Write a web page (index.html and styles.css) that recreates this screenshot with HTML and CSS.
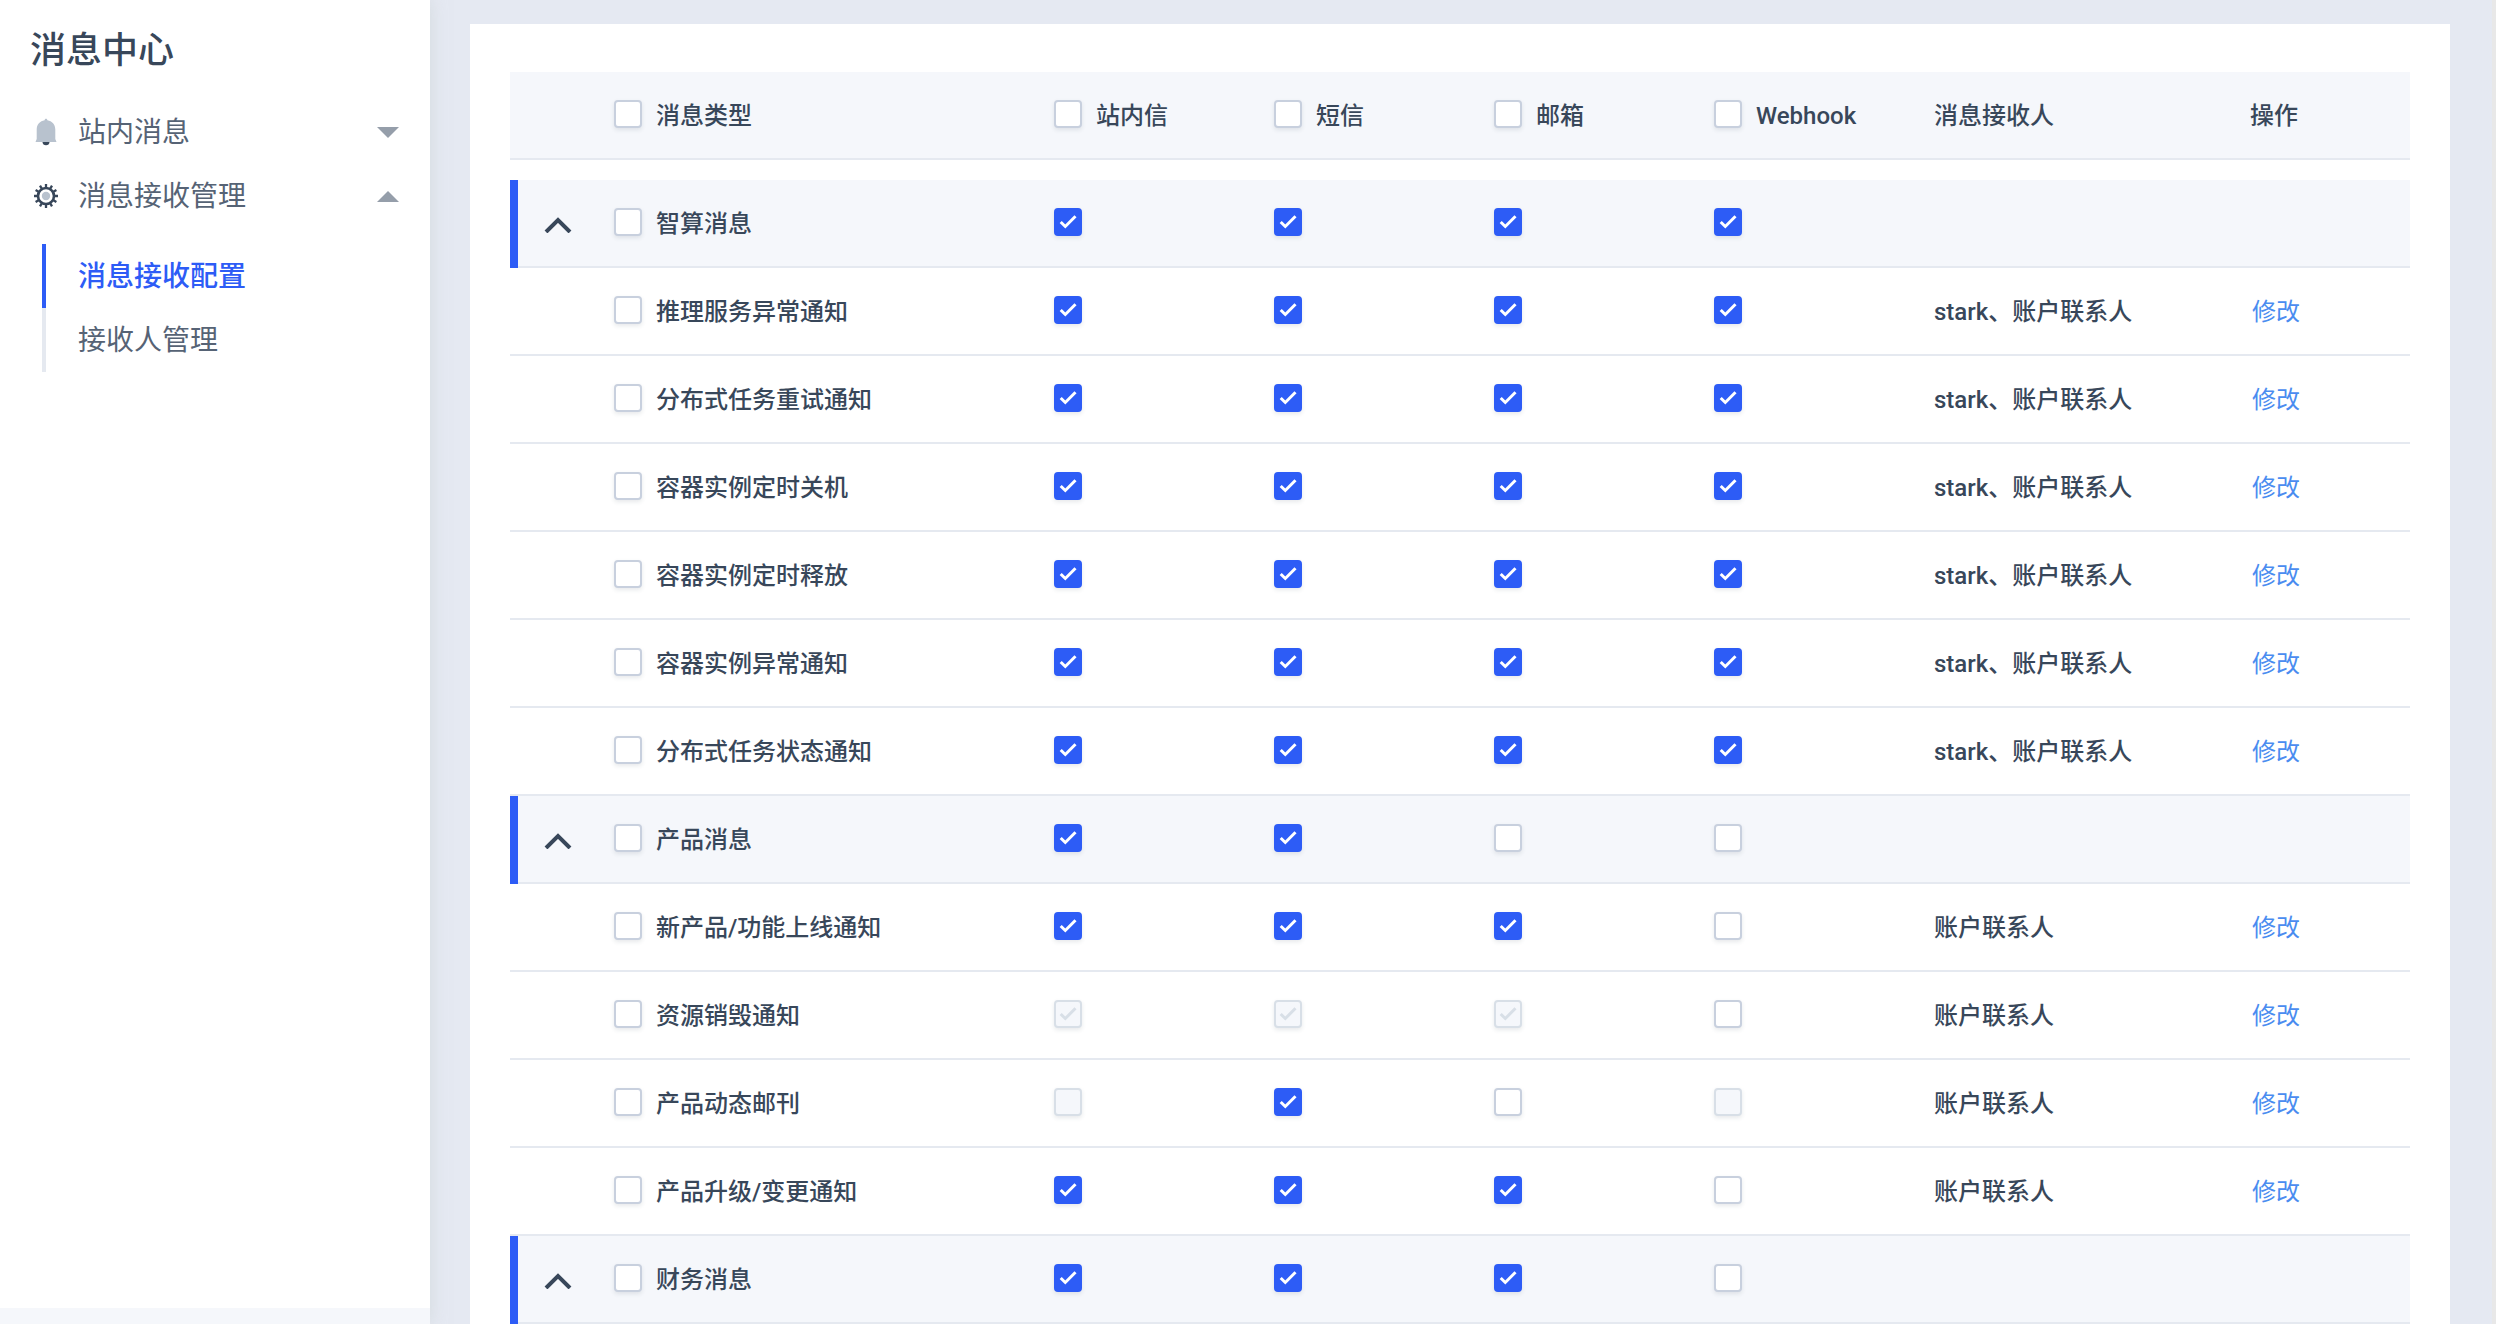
FILE: index.html
```html
<!DOCTYPE html>
<html lang="zh-CN">
<head>
<meta charset="utf-8">
<meta name="viewport" content="width=device-width, initial-scale=1">
<title>消息中心</title>
<link rel="stylesheet" href="styles.css">
</head>
<body>
<div class="app">
  <aside class="sidebar">
    <h1 class="sidebar-title">消息中心</h1>
    <nav class="menu">
      <button class="menu-item" type="button" aria-expanded="false">
        <svg class="menu-icon" viewBox="0 0 26 28" aria-hidden="true">
          <path d="M9.500 24h7c0 2-1.500 3.300-3.500 3.300S9.500 26 9.500 24z" fill="#38475a"/>
          <path d="M13 0.800c0.900 0 1.300 0.600 1.400 1.500C19 3 22.300 6.500 22.300 11.500V21l1.200 3H2.500l1.200-3v-9.500C3.700 6.500 7 3 11.600 2.300c0.100-0.900 0.500-1.500 1.400-1.500z" fill="#b8c2ce"/>
        </svg>
        <span class="menu-label">站内消息</span>
        <svg class="arrow" viewBox="0 0 22 11" aria-hidden="true"><path d="M0 0h22L11 11z"/></svg>
      </button>
      <button class="menu-item" type="button" aria-expanded="true">
        <svg class="menu-icon" viewBox="0 0 26 28" aria-hidden="true">
          <circle cx="13" cy="14" r="8" fill="none" stroke="#38475a" stroke-width="2.600"/>
          <path d="M13 2v4M13 22v4M1 14h4M21 14h4M7 3.600l2 3.460M17 20.940l2 3.460M2.600 8l3.460 2M19.940 18l3.460 2M2.600 20l3.460-2M19.940 10l3.460-2M7 24.400l2-3.460M17 7.060l2-3.460" stroke="#38475a" stroke-width="2.300"/>
          <circle cx="13" cy="14" r="4.200" fill="#b8c2ce"/>
        </svg>
        <span class="menu-label">消息接收管理</span>
        <svg class="arrow" viewBox="0 0 22 11" aria-hidden="true"><path d="M0 11h22L11 0z"/></svg>
      </button>
      <div class="submenu">
        <a class="submenu-item active" href="#config" aria-current="page">消息接收配置</a>
        <a class="submenu-item" href="#receivers">接收人管理</a>
      </div>
    </nav>
    <div class="sidebar-footer"></div>
  </aside>
  <main class="content">
    <section class="card">
      <table class="table">
        <colgroup>
          <col class="col-toggle"><col><col class="col-channel"><col class="col-channel"><col class="col-channel"><col class="col-channel"><col class="col-receiver"><col class="col-action">
        </colgroup>
        <thead>
          <tr class="shaded">
            <td></td>
            <th scope="col"><label class="field"><input class="check" type="checkbox"><span>消息类型</span></label></th>
            <th scope="col"><label class="field"><input class="check" type="checkbox"><span>站内信</span></label></th>
            <th scope="col"><label class="field"><input class="check" type="checkbox"><span>短信</span></label></th>
            <th scope="col"><label class="field"><input class="check" type="checkbox"><span>邮箱</span></label></th>
            <th scope="col"><label class="field"><input class="check" type="checkbox"><span>Webhook</span></label></th>
            <th scope="col">消息接收人</th>
            <th scope="col">操作</th>
          </tr>
        </thead>
        <tbody id="rows">
          <tr class="spacer"><td colspan="8"></td></tr>
        </tbody>
      </table>
    </section>
  </main>
</div>
<script src="app.js"></script>
</body>
</html>
```
FILE: styles.css
```css
* { box-sizing: border-box; }

body {
  margin: 0;
  background: #e5e9f2;
  color: #38475a;
  font: 500 24px/32px Roboto, "Noto Sans CJK SC", sans-serif;
}

button {
  border: 0;
  padding: 0;
  background: none;
  color: inherit;
  font: inherit;
  text-align: left;
  cursor: pointer;
}

a { text-decoration: none; }

.app {
  display: flex;
  height: 100vh;
  overflow: hidden;
  border-right: 4px solid #e8e8e8;
}

.sidebar {
  display: flex;
  flex: 0 0 430px;
  flex-direction: column;
  background: #fff;
  box-shadow: 0 0 16px rgba(200, 208, 208, 0.6);
}

.sidebar-title {
  margin: 0;
  padding: 27px 30px 25px;
  font-size: 36px;
  line-height: 48px;
  font-weight: 500;
}

.menu {
  flex: 1;
  color: #566375;
  font-size: 28px;
  line-height: 62px;
  font-weight: 400;
}

.menu-item {
  display: flex;
  align-items: center;
  width: 100%;
  height: 64px;
  padding: 0 31px 0 33px;
}

.menu-icon {
  width: 26px;
  height: 28px;
}

.menu-label {
  flex: 1;
  padding: 2px 0 0 19px;
}

.arrow {
  width: 22px;
  height: 11px;
  fill: #959eaa;
}

.submenu { padding: 16px 0 0 42px; }

.submenu-item {
  display: block;
  height: 64px;
  padding: 2px 0 0 32px;
  border-left: 4px solid #e5e9f0;
  color: inherit;
}

.submenu-item.active {
  border-color: #2d5cf6;
  color: #2d5cf6;
  font-weight: 500;
}

.sidebar-footer {
  height: 16px;
  background: #f5f7fb;
}

.content {
  flex: 1;
  min-width: 0;
  padding: 24px 42px 0 40px;
}

.card {
  padding: 48px 40px;
  background: #fff;
}

.table {
  width: 100%;
  border-spacing: 0;
  table-layout: fixed;
}

.col-toggle { width: 104px; }
.col-channel { width: 220px; }
.col-receiver { width: 316px; }
.col-action { width: 160px; }

/* Row lines are backgrounds so that the group bar can run over them */
.table th,
.table td {
  height: 88px;
  padding: 2px 0;
  background: linear-gradient(#e5e9f0, #e5e9f0) 0 100% / 100% 2px no-repeat;
  font-weight: 500;
  text-align: left;
  white-space: nowrap;
}

.table .spacer td {
  height: 20px;
  padding: 0;
  background: none;
}

.shaded { background: #f5f7fb; }

.table .group-toggle {
  background:
    linear-gradient(#2d5cf6, #2d5cf6) 0 0 / 8px 100% no-repeat,
    linear-gradient(#e5e9f0, #e5e9f0) 0 100% / 100% 2px no-repeat;
}

.toggle {
  display: flex;
  align-items: center;
  margin-left: 34px;
}

.toggle svg {
  width: 28px;
  height: 18px;
  fill: none;
  stroke: #38475a;
  stroke-width: 4;
}

.field {
  display: flex;
  align-items: center;
  gap: 14px;
}

.check {
  display: block;
  width: 28px;
  height: 28px;
  margin: 0 0 4px;
  appearance: none;
  border: 2px solid #c8d0de;
  border-radius: 4px;
  background: #fff center / 24px 24px no-repeat;
  box-shadow: 0 2px 4px rgba(56, 71, 90, 0.12);
}

.check:checked {
  border-color: #2d5cf6;
  background-color: #2d5cf6;
  background-image: url("data:image/svg+xml,%3Csvg xmlns='http://www.w3.org/2000/svg' viewBox='0 0 24 24'%3E%3Cpath d='M4.700 12l4.600 4.500L19.500 6.300' fill='none' stroke='%23fff' stroke-width='3'/%3E%3C/svg%3E");
}

.check:disabled {
  border-color: #d8dfe7;
  background-color: #f5f7fb;
}

.check:checked:disabled {
  background-image: url("data:image/svg+xml,%3Csvg xmlns='http://www.w3.org/2000/svg' viewBox='0 0 24 24'%3E%3Cpath d='M4.700 12l4.600 4.500L19.500 6.300' fill='none' stroke='%23d8dfe7' stroke-width='3'/%3E%3C/svg%3E");
}

.edit {
  padding-left: 2px;
  color: #4a8cf0;
  font-weight: 400;
}
```
FILE: app.js
```js
// Channel state codes: 1 on, 0 off, x locked on, - locked off
const groups = [
  { name: '智算消息', state: '1111', receivers: 'stark、账户联系人', items: [
    ['推理服务异常通知', '1111'],
    ['分布式任务重试通知', '1111'],
    ['容器实例定时关机', '1111'],
    ['容器实例定时释放', '1111'],
    ['容器实例异常通知', '1111'],
    ['分布式任务状态通知', '1111']
  ] },
  { name: '产品消息', state: '1100', receivers: '账户联系人', items: [
    ['新产品/功能上线通知', '1110'],
    ['资源销毁通知', 'xxx0'],
    ['产品动态邮刊', '-10-'],
    ['产品升级/变更通知', '1110']
  ] },
  { name: '财务消息', state: '1110', receivers: '', items: [] }
];
const channels = ['站内信', '短信', '邮箱', 'Webhook'];

const typeCell = name =>
  `<td><label class="field"><input class="check" type="checkbox"><span>${name}</span></label></td>`;

const channelCells = (name, state) => [...state].map((s, i) =>
  `<td><input class="check" type="checkbox" aria-label="${name} ${channels[i]}"` +
  `${s === '1' || s === 'x' ? ' checked' : ''}${s === 'x' || s === '-' ? ' disabled' : ''}></td>`
).join('');

const html = groups.map(g =>
  `<tr class="shaded"><td class="group-toggle"><button class="toggle" type="button" aria-expanded="true" aria-label="收起${g.name}">` +
  `<svg viewBox="0 0 28 18" aria-hidden="true"><path d="M2 17L14 5L26 17"/></svg></button></td>` +
  typeCell(g.name) + channelCells(g.name, g.state) + '<td></td><td></td></tr>' +
  g.items.map(([name, state]) =>
    `<tr><td></td>${typeCell(name)}${channelCells(name, state)}<td>${g.receivers}</td><td><a class="edit" href="#edit">修改</a></td></tr>`
  ).join('')
).join('');

document.getElementById('rows').insertAdjacentHTML('beforeend', html);
```
